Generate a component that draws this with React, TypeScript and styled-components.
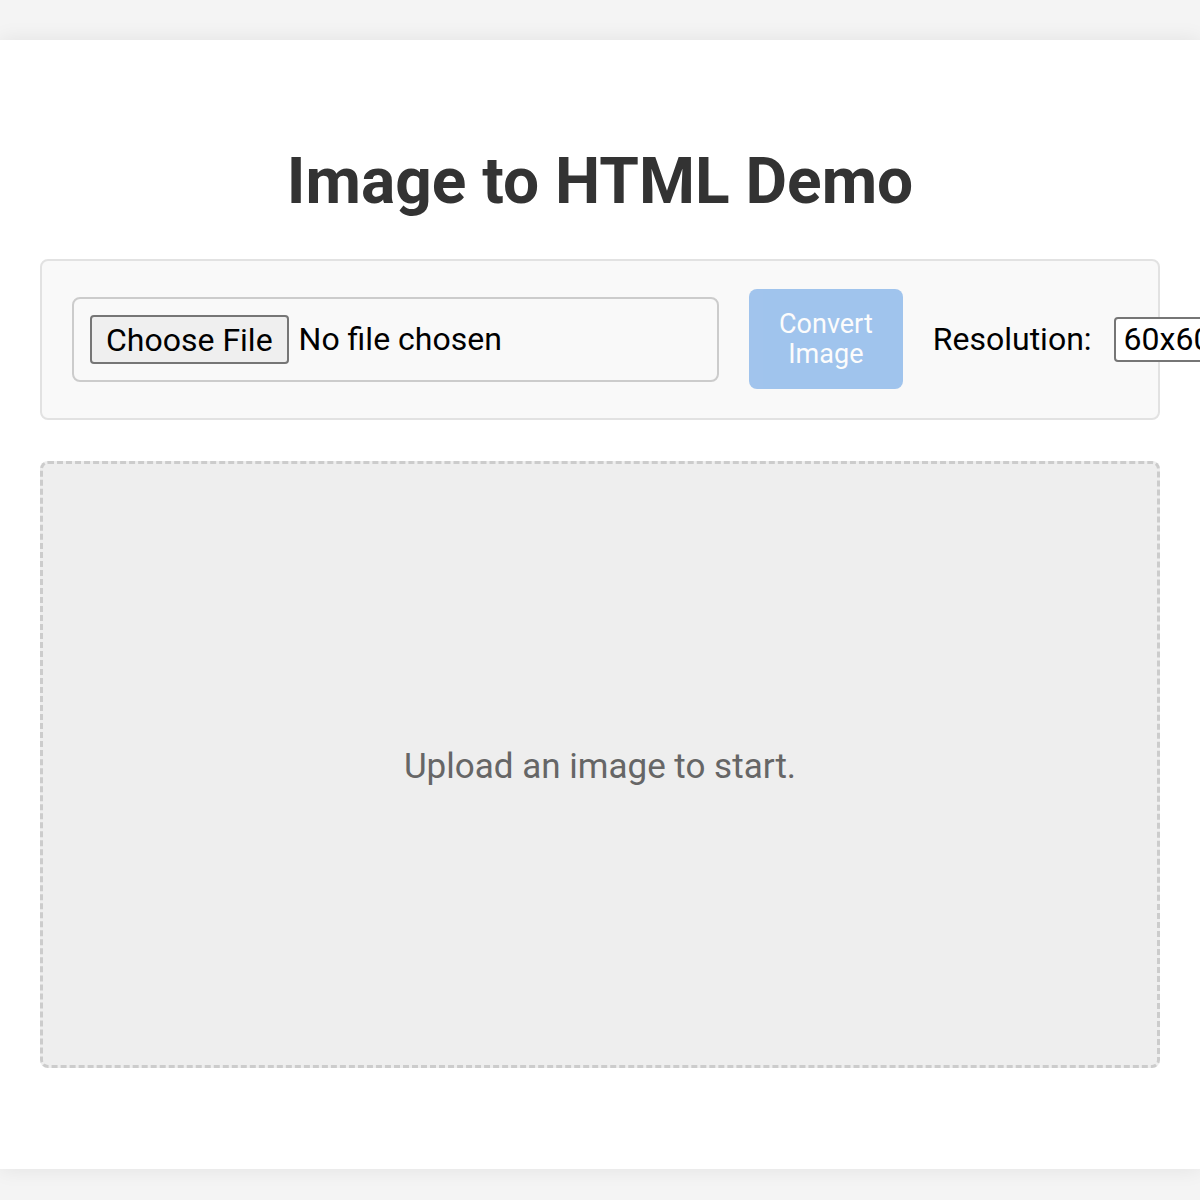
import { FC } from 'react';
import styled, { createGlobalStyle } from 'styled-components';

const GlobalStyle = createGlobalStyle`
  html, body {
    margin: 0;
    padding: 0;
    background: #f4f4f4;
    font-family: Roboto, "Liberation Sans", Arial, sans-serif;
    overflow: hidden;
  }
`;

const Page = styled.div`
  padding: 40px 0 0;
  height: 1200px;
  box-sizing: border-box;
`;

const Card = styled.main`
  background: #fff;
  padding: 104px 40px 101px;
  box-shadow: 0 0 20px rgba(0, 0, 0, 0.08);
`;

const Title = styled.h1`
  margin: 0 0 40px;
  text-align: center;
  font-size: 64px;
  font-weight: 700;
  color: #333;
  line-height: 75px;
`;

const Controls = styled.section`
  display: flex;
  align-items: center;
  gap: 30px;
  padding: 28px 30px 29px;
  background: #f9f9f9;
  border: 2px solid #e2e2e2;
  border-radius: 8px;
`;

const FileBox = styled.label`
  flex: 0 0 647px;
  box-sizing: border-box;
  display: flex;
  align-items: center;
  gap: 10px;
  padding: 16px;
  border: 2px solid #ccc;
  border-radius: 8px;
  font-size: 32px;
  color: #000;
  white-space: nowrap;
  cursor: pointer;

  input {
    display: none;
  }
`;

const FileButton = styled.span`
  display: inline-block;
  height: 49px;
  box-sizing: border-box;
  padding: 0 14px;
  line-height: 46px;
  background: #efefef;
  border: 2px solid #767676;
  border-radius: 4px;
`;

const ConvertButton = styled.button`
  flex: none;
  width: min-content;
  padding: 20px 30px;
  border: none;
  border-radius: 8px;
  background: #4a90e2;
  opacity: 0.5;
  color: #fff;
  font-family: inherit;
  font-size: 27px;
  line-height: 30px;
  cursor: not-allowed;
`;

const ResolutionGroup = styled.div`
  flex: none;
  display: flex;
  align-items: center;
  gap: 22px;
  font-size: 32px;
  color: #000;
`;

const Select = styled.select`
  height: 45px;
  padding: 0 8px;
  background: #fff;
  border: 2px solid #767676;
  border-radius: 4px;
  font-family: inherit;
  font-size: 32px;
  color: #000;
  appearance: none;
`;

const DropZone = styled.div`
  margin-top: 41px;
  height: 607px;
  box-sizing: border-box;
  display: flex;
  align-items: center;
  justify-content: center;
  padding-top: 3px;
  background: #eee;
  border: 3px dashed #ccc;
  border-radius: 8px;
  font-size: 35px;
  color: #666;
`;

const App: FC = () => {
  return (
    <Page>
      <GlobalStyle />
      <Card>
        <Title>Image to HTML Demo</Title>
        <Controls>
          <FileBox>
            <input type="file" accept="image/*" />
            <FileButton>Choose File</FileButton>
            No file chosen
          </FileBox>
          <ConvertButton disabled>Convert Image</ConvertButton>
          <ResolutionGroup>
            <span>Resolution:</span>
            <Select defaultValue="60">
              <option value="60">60x60</option>
              <option value="100">100x100</option>
            </Select>
          </ResolutionGroup>
        </Controls>
        <DropZone>Upload an image to start.</DropZone>
      </Card>
    </Page>
  );
};

export default App;
